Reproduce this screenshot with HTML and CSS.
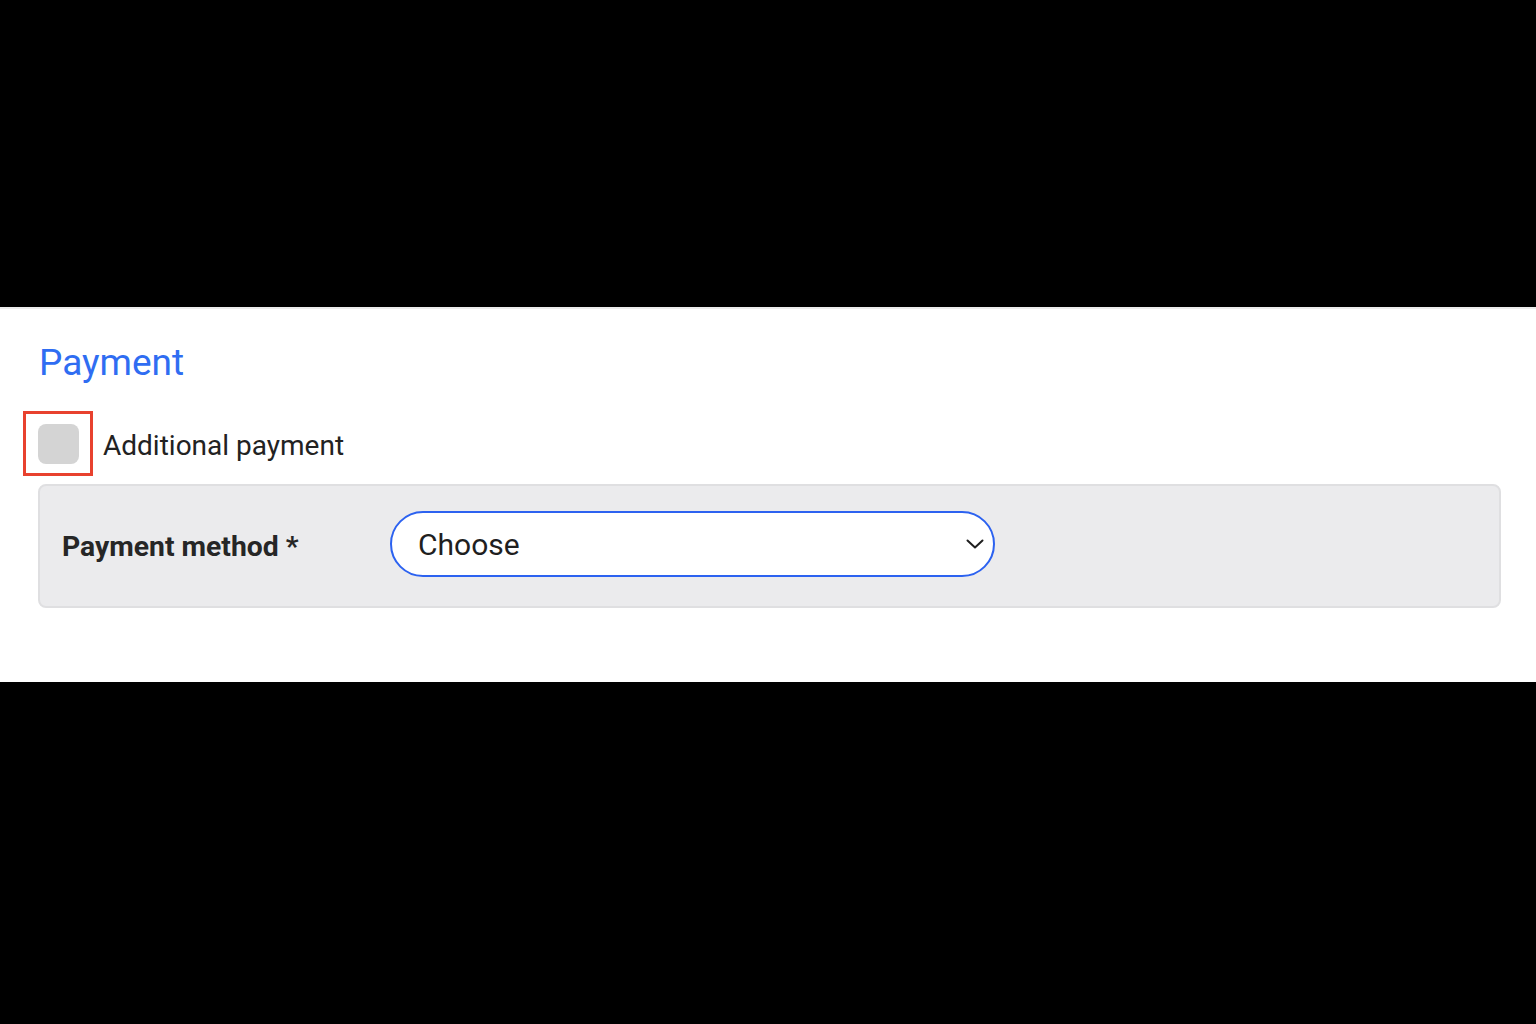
FILE: index.html
```html
<!DOCTYPE html>
<html lang="en">
<head>
<meta charset="utf-8">
<title>Payment</title>
<link rel="stylesheet" href="styles.css">
</head>
<body>
<div class="band-top"></div>
<section class="panel">
  <h2 class="title">Payment</h2>
  <label class="check-row">
    <span class="highlight"><span class="checkbox"></span></span>
    <span class="check-label">Additional payment</span>
  </label>
  <div class="field-box">
    <div class="field-label">Payment method *</div>
    <div class="select">
      <span class="select-value">Choose</span>
      <svg class="chevron" width="18" height="10" viewBox="0 0 18 10" aria-hidden="true">
        <path d="M1.5 1.5 L9 8.5 L16.5 1.5" fill="none" stroke="#1f1f1f" stroke-width="2" stroke-linecap="round" stroke-linejoin="round"/>
      </svg>
    </div>
  </div>
</section>
</body>
</html>
```
FILE: styles.css
```css
* { box-sizing: border-box; }
html, body { margin: 0; padding: 0; }
body {
  background: #000;
  width: 1536px;
  height: 1024px;
  font-family: Roboto, "Liberation Sans", Arial, sans-serif;
  color: #222;
}
.band-top { height: 307px; }
.panel {
  background: #fff;
  border-top: 2px solid #ececec;
  height: 375px;
  padding: 33px 35px 0 38px;
}
.title {
  margin: 0 0 0 1px;
  font-size: 37px;
  line-height: 42px;
  font-weight: 400;
  color: #2f6df2;
}
.check-row {
  display: flex;
  align-items: center;
  gap: 10px;
  margin: 27px 0 0 -15px;
}
.highlight {
  display: block;
  border: 3px solid #e8412e;
  padding: 10px 11px 9px 12px;
}
.checkbox {
  display: block;
  width: 41px;
  height: 40px;
  border-radius: 8px;
  background: #d4d4d4;
}
.check-label {
  font-size: 28px;
  line-height: 32px;
  color: #222;
  margin-top: 4px;
}
.field-box {
  margin-top: 8px;
  background: #ebebed;
  border: 2px solid #dfdfe1;
  border-radius: 8px;
  height: 124px;
  display: grid;
  grid-template-columns: 328px 605px;
  align-items: center;
  padding: 0 0 4px 22px;
}
.field-label {
  font-size: 28.3px;
  font-weight: 700;
  color: #262626;
  margin-top: 5px;
}
.select {
  height: 66px;
  border: 2px solid #2c62f0;
  border-radius: 33px;
  background: #fff;
  display: flex;
  align-items: center;
  justify-content: space-between;
  padding: 0 9px 0 26px;
}
.select-value {
  font-size: 30px;
  color: #1f1f1f;
}
.chevron { display: block; }
```
